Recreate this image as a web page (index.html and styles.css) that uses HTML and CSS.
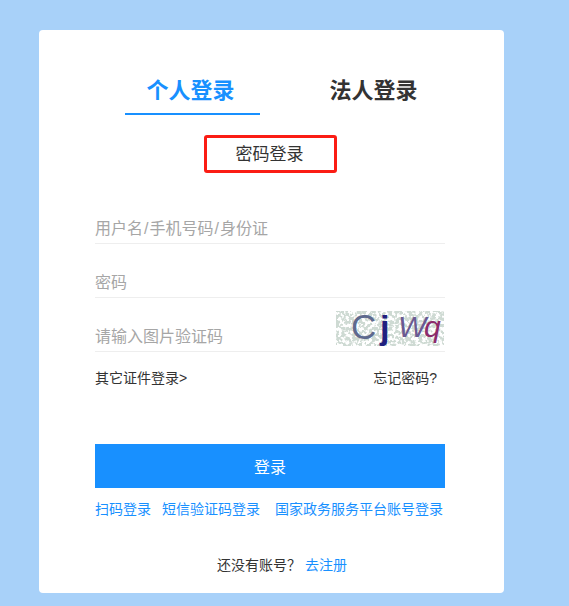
FILE: index.html
```html
<!DOCTYPE html>
<html lang="zh">
<head>
<meta charset="utf-8">
<title>登录</title>
<link rel="stylesheet" href="styles.css">
</head>
<body>
<main class="card">
  <div class="tabs">
    <div class="tab tab-active">个人登录</div>
    <div class="tab">法人登录</div>
  </div>
  <div class="mode-row"><div class="mode">密码登录</div></div>
  <form class="form">
    <div class="field"><span class="placeholder">用户名<span class="slash">/</span>手机号码<span class="slash">/</span>身份证</span></div>
    <div class="field"><span class="placeholder">密码</span></div>
    <div class="field">
      <span class="placeholder">请输入图片验证码</span>
      <div class="captcha">
        <svg class="captcha-noise" width="108" height="35" viewBox="0 0 108 35" aria-hidden="true">
          <filter id="noise" x="0" y="0" width="100%" height="100%">
            <feTurbulence type="fractalNoise" baseFrequency="0.3" numOctaves="2" seed="7"/>
            <feColorMatrix type="matrix" values="0 0 0 0 0.62  0 0 0 0 0.70  0 0 0 0 0.65  9 0 0 0 -3.9"/>
          </filter>
          <rect width="108" height="35" fill="#fff"/>
          <rect width="108" height="35" filter="url(#noise)"/>
        </svg>
        <span class="cap cap-c">C</span><span class="cap cap-j">j</span><span class="cap cap-w">W</span><span class="cap cap-q">q</span>
      </div>
    </div>
    <div class="helpers">
      <a class="helper">其它证件登录&gt;</a>
      <a class="helper helper-right">忘记密码?</a>
    </div>
    <button class="submit" type="button">登录</button>
    <div class="alt-links">
      <a class="link">扫码登录</a>
      <a class="link">短信验证码登录</a>
      <a class="link">国家政务服务平台账号登录</a>
    </div>
  </form>
  <p class="register">还没有账号？ <a class="link">去注册</a></p>
</main>
</body>
</html>
```

FILE: styles.css
```css
* { box-sizing: border-box; }
html, body { height: 100%; }
body {
  margin: 0;
  height: 606px;
  overflow: hidden;
  background: #a8d1f9;
  font-family: "Liberation Sans", "Noto Sans CJK SC", sans-serif;
  color: #333;
}
.card {
  width: 465px;
  height: 563px;
  margin: 30px 0 0 39px;
  padding: 42px 59px 0 56px;
  background: #fff;
  border-radius: 4px;
}
.tabs {
  display: flex;
  height: 43px;
  margin-left: 30px;
  gap: 46px;
}
.tab {
  width: 135px;
  height: 43px;
  padding-top: 4px;
  font-size: 22px;
  line-height: 30px;
  font-weight: 700;
  text-align: center;
  color: #333;
}
.tab-active {
  color: #1890ff;
  border-bottom: 2px solid #1890ff;
  padding-right: 4px;
}
.mode-row {
  display: flex;
  margin-top: 20px;
  padding-left: 109px;
}
.mode {
  width: 133px;
  height: 38px;
  border: 3px solid #fb1c14;
  border-radius: 3px;
  padding-right: 2px;
  font-size: 17px;
  line-height: 34px;
  text-align: center;
  color: #333;
}
.form { margin-top: 16px; }
.field {
  position: relative;
  height: 54px;
  padding-top: 27px;
  border-bottom: 1px solid #eee;
  font-size: 16px;
  line-height: 23px;
}
.field:first-child { height: 55px; padding-top: 28px; }
.placeholder { color: #a6a6a6; }
.slash { margin: 0 1px; }
.captcha {
  position: absolute;
  top: 13px;
  right: 1px;
  width: 108px;
  height: 35px;
}
.captcha-noise { position: absolute; inset: 0; }
.cap {
  position: absolute;
  font-family: "Liberation Sans", sans-serif;
  line-height: 1;
}
.cap-c { left: 15px; top: -2px; font-size: 35px; color: #5e6a8e; }
.cap-j { left: 44px; top: -1px; font-size: 34px; font-weight: 700; color: #20207e; }
.cap-w { left: 62px; top: 1px; font-size: 30px; font-style: italic; color: #6a5a92; }
.cap-q { left: 88px; top: 1px; font-size: 30px; font-style: italic; color: #8c2b6b; }
.helpers {
  display: flex;
  justify-content: space-between;
  margin-top: 16px;
  font-size: 14px;
  line-height: 20px;
  color: #333;
}
.helper-right { margin-right: 8px; }
.submit {
  display: block;
  width: 350px;
  height: 44px;
  margin-top: 56px;
  padding: 0;
  border: 0;
  background: #1890ff;
  color: #fff;
  font: inherit;
  font-size: 16px;
}
.alt-links {
  display: flex;
  margin-top: 11px;
  font-size: 14px;
  line-height: 20px;
  gap: 11px;
}
.alt-links .link:last-child { margin-left: 4px; }
.link { color: #1890ff; }
.register {
  margin: 36px 0 0;
  padding-left: 122px;
  font-size: 14px;
  line-height: 20px;
  color: #333;
}
```
